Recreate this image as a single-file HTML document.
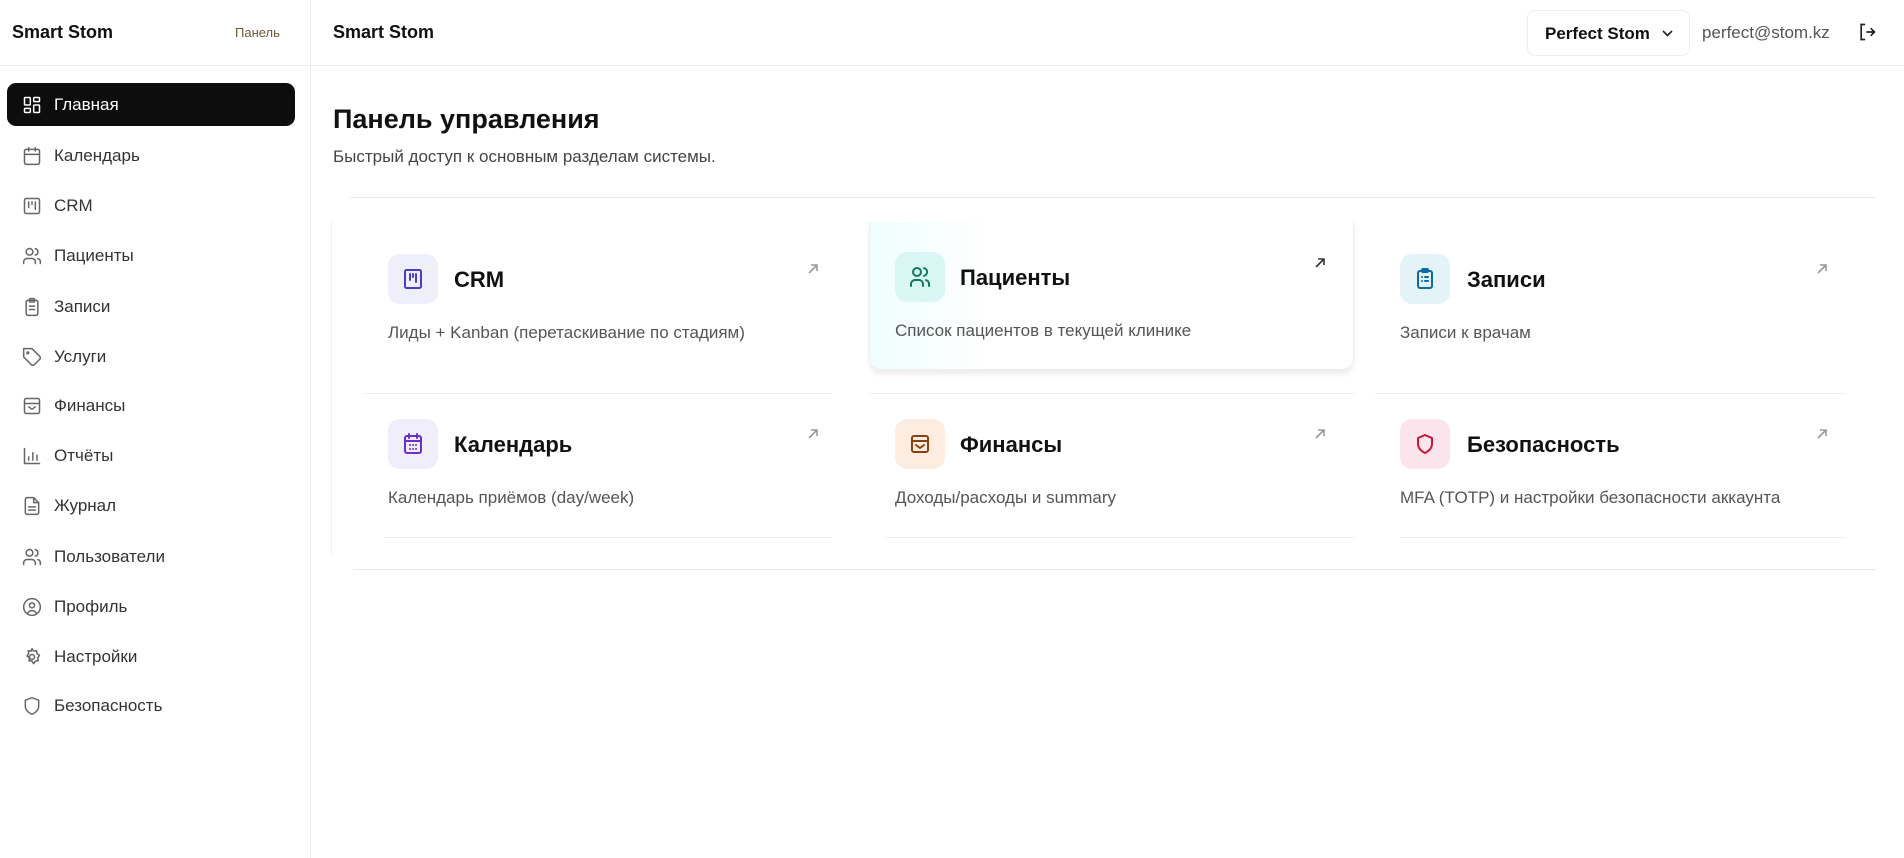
<!DOCTYPE html>
<html><head><meta charset="utf-8"><style>
*{box-sizing:border-box;margin:0;padding:0}
body{width:1904px;height:858px;overflow:hidden;background:#fff;font-family:"Liberation Sans","DejaVu Sans",sans-serif;color:#111;position:relative}
.abs{position:absolute}
.sb{left:0;top:0;width:311px;height:858px;border-right:1px solid #ececec}
.hdr{left:0;top:0;width:1904px;height:66px;border-bottom:1px solid #ececec}
.nav{position:absolute;left:7px;width:288px;height:43px;border-radius:9px;display:flex;align-items:center;padding-left:15px;font-size:17px;color:#333}
.nav svg{width:20px;height:20px;margin-right:12px;stroke:#666;fill:none;stroke-width:1.8;stroke-linecap:round;stroke-linejoin:round}
.nav.act{background:#0d0d0d;color:#fff}
.nav.act svg{stroke:#fff}
.ib{position:absolute;width:50px;height:50px;border-radius:12px;display:flex;align-items:center;justify-content:center}
.ib svg{width:24px;height:24px;fill:none;stroke-width:2;stroke-linecap:round;stroke-linejoin:round}
.ct{position:absolute;font-size:22px;font-weight:bold;color:#111}
.cd{position:absolute;font-size:17px;color:#555}
.ar{position:absolute;width:14px;height:14px;stroke:#999;fill:none;stroke-width:1.6}
</style></head><body>
<div class="abs hdr"></div>
<div class="abs sb"></div>
<div class="abs" style="left:12px;top:22px;font-size:18px;font-weight:bold">Smart Stom</div>
<div class="abs" style="left:235px;top:25px;font-size:13px;color:#6b5a3c">Панель</div>
<div class="abs" style="left:333px;top:22px;font-size:18px;font-weight:bold">Smart Stom</div>
<div class="abs" style="left:1527px;top:10px;width:163px;height:46px;border:1px solid #eee;border-radius:8px;font-size:17px;font-weight:bold;padding:13px 0 0 17px">Perfect Stom<svg style="position:absolute;left:133px;top:18px" width="13" height="9" viewBox="0 0 13 9"><path d="M2 2l4.5 4.5L11 2" stroke="#222" stroke-width="1.6" fill="none"/></svg></div>
<div class="abs" style="left:1702px;top:23px;font-size:17px;color:#555">perfect@stom.kz</div>
<svg class="abs" style="left:1857px;top:22px" width="20" height="20" viewBox="0 0 24 24" fill="none" stroke="#222" stroke-width="2" stroke-linecap="round"><path d="M9 3H5v18h4M12 12h9M17 8l4 4-4 4"/></svg>

<div class="nav act" style="top:83px"><svg viewBox="0 0 24 24"><rect x="3" y="3" width="7" height="9" rx="1"/><rect x="14" y="3" width="7" height="5" rx="1"/><rect x="14" y="12" width="7" height="9" rx="1"/><rect x="3" y="16" width="7" height="5" rx="1"/></svg>Главная</div>
<div class="nav" style="top:134px"><svg viewBox="0 0 24 24"><rect x="3" y="4" width="18" height="18" rx="2"/><path d="M16 2v4M8 2v4M3 10h18"/></svg>Календарь</div>
<div class="nav" style="top:184px"><svg viewBox="0 0 24 24"><rect x="3" y="3" width="18" height="18" rx="2"/><path d="M8 7v7M12 7v3M16 7v9"/></svg>CRM</div>
<div class="nav" style="top:234px"><svg viewBox="0 0 24 24"><circle cx="9" cy="7" r="4"/><path d="M2 21v-2a4 4 0 014-4h6a4 4 0 014 4v2M16 3.1a4 4 0 010 7.8M22 21v-2a4 4 0 00-3-3.9"/></svg>Пациенты</div>
<div class="nav" style="top:285px"><svg viewBox="0 0 24 24"><rect x="5" y="4" width="14" height="18" rx="2"/><rect x="9" y="2" width="6" height="4" rx="1"/><path d="M9 11h6M9 15h6"/></svg>Записи</div>
<div class="nav" style="top:335px"><svg viewBox="0 0 24 24"><path d="M12 2H2v10l9.3 9.3a2.4 2.4 0 003.4 0l6.6-6.6a2.4 2.4 0 000-3.4z"/><circle cx="7" cy="7" r="1"/></svg>Услуги</div>
<div class="nav" style="top:384px"><svg viewBox="0 0 24 24"><rect x="3" y="3" width="18" height="18" rx="2"/><path d="M3 9h18M8 13l4 3 4-3"/></svg>Финансы</div>
<div class="nav" style="top:434px"><svg viewBox="0 0 24 24"><path d="M3 3v18h18M8 17v-4M13 17V8M18 17v-6"/></svg>Отчёты</div>
<div class="nav" style="top:484px"><svg viewBox="0 0 24 24"><path d="M14 2H6a2 2 0 00-2 2v16a2 2 0 002 2h12a2 2 0 002-2V8z"/><path d="M14 2v6h6M8 13h8M8 17h8"/></svg>Журнал</div>
<div class="nav" style="top:535px"><svg viewBox="0 0 24 24"><circle cx="9" cy="7" r="4"/><path d="M2 21v-2a4 4 0 014-4h6a4 4 0 014 4v2M16 3.1a4 4 0 010 7.8M22 21v-2a4 4 0 00-3-3.9"/></svg>Пользователи</div>
<div class="nav" style="top:585px"><svg viewBox="0 0 24 24"><circle cx="12" cy="12" r="10"/><circle cx="12" cy="10" r="3"/><path d="M7 19a6 6 0 0110 0"/></svg>Профиль</div>
<div class="nav" style="top:635px"><svg viewBox="0 0 24 24"><circle cx="12" cy="12" r="3"/><path d="M12 2l2 3 3.5-.5.5 3.5 3 2-2 3 .5 3.5-3.5.5-2 3-2-3-3.5-.5.5-3.5-3-2 2-3-.5-3.5 3.5.5z"/></svg>Настройки</div>
<div class="nav" style="top:684px"><svg viewBox="0 0 24 24"><path d="M12 22s8-3 8-10V5l-8-3-8 3v7c0 7 8 10 8 10z"/></svg>Безопасность</div>

<div class="abs" style="left:333px;top:104px;font-size:27px;font-weight:bold;color:#111">Панель управления</div>
<div class="abs" style="left:333px;top:147px;font-size:17px;color:#444">Быстрый доступ к основным разделам системы.</div>
<div class="abs" style="left:350px;top:197px;width:1526px;height:1px;background:#e8e8e8"></div>
<div class="abs" style="left:331px;top:222px;width:1px;height:332px;background:#f0f0f0"></div>
<div class="abs" style="left:353px;top:569px;width:1523px;height:1px;background:#e8e8e8"></div>
<div class="abs" style="left:364px;top:393px;width:468px;height:1px;background:#eee"></div>
<div class="abs" style="left:1375px;top:393px;width:470px;height:1px;background:#eee"></div>
<div class="abs" style="left:385px;top:537px;width:447px;height:1px;background:#eee"></div>
<div class="abs" style="left:1400px;top:537px;width:445px;height:1px;background:#eee"></div>
<div class="abs" style="left:869px;top:222px;width:485px;height:148px;border:1px solid #eee;border-top:none;border-radius:0 0 12px 12px;box-shadow:0 4px 6px rgba(0,0,0,0.08);background:linear-gradient(90deg,#effdfd 0,#fff 120px)"></div>
<div class="abs" style="left:869px;top:393px;width:485px;height:1px;background:#eee"></div>
<div class="abs" style="left:885px;top:537px;width:469px;height:1px;background:#eee"></div>

<div class="ib" style="left:388px;top:254px;background:#efeefb"><svg viewBox="0 0 24 24" stroke="#4a3fc2"><rect x="4" y="3" width="16" height="18" rx="1.5"/><path d="M9 7v6M12 7v3M15 7v8"/></svg></div>
<div class="ct" style="left:454px;top:267px">CRM</div>
<div class="cd" style="left:388px;top:323px">Лиды + Kanban (перетаскивание по стадиям)</div>
<svg class="ar" style="left:806px;top:262px" viewBox="0 0 14 14"><path d="M3 11L11 3M5 3h6v6"/></svg>

<div class="ib" style="left:895px;top:252px;background:#d9f6f5"><svg viewBox="0 0 24 24" stroke="#137a5e"><circle cx="9" cy="7" r="4"/><path d="M3 21v-2a4 4 0 014-4h4a4 4 0 014 4v2M16 3.1a4 4 0 010 7.8M21 21v-2a4 4 0 00-3-3.9"/></svg></div>
<div class="ct" style="left:960px;top:265px">Пациенты</div>
<div class="cd" style="left:895px;top:321px">Список пациентов в текущей клинике</div>
<svg class="ar" style="left:1313px;top:256px;stroke:#333" viewBox="0 0 14 14"><path d="M3 11L11 3M5 3h6v6"/></svg>

<div class="ib" style="left:1400px;top:254px;background:#e3f3f8"><svg viewBox="0 0 24 24" stroke="#0b6aa8"><rect x="5" y="4" width="14" height="17" rx="2"/><rect x="9" y="2" width="6" height="3" rx="1"/><path d="M9 10h.01M12 10h3M9 14h.01M12 14h3"/></svg></div>
<div class="ct" style="left:1467px;top:267px">Записи</div>
<div class="cd" style="left:1400px;top:323px">Записи к врачам</div>
<svg class="ar" style="left:1815px;top:262px" viewBox="0 0 14 14"><path d="M3 11L11 3M5 3h6v6"/></svg>

<div class="ib" style="left:388px;top:419px;background:#f1eefb"><svg viewBox="0 0 24 24" stroke="#6a2fc6"><rect x="4" y="4" width="16" height="17" rx="2"/><path d="M8 2v4M16 2v4M4 9h16M9 13h.01M12 13h.01M15 13h.01M9 17h.01M12 17h.01M15 17h.01"/></svg></div>
<div class="ct" style="left:454px;top:432px">Календарь</div>
<div class="cd" style="left:388px;top:488px">Календарь приёмов (day/week)</div>
<svg class="ar" style="left:806px;top:427px" viewBox="0 0 14 14"><path d="M3 11L11 3M5 3h6v6"/></svg>

<div class="ib" style="left:895px;top:419px;background:#fdece0"><svg viewBox="0 0 24 24" stroke="#8a3f10"><rect x="4" y="4" width="16" height="16" rx="2"/><path d="M4 9h16M8 13l4 3 4-3"/></svg></div>
<div class="ct" style="left:960px;top:432px">Финансы</div>
<div class="cd" style="left:895px;top:488px">Доходы/расходы и summary</div>
<svg class="ar" style="left:1313px;top:427px" viewBox="0 0 14 14"><path d="M3 11L11 3M5 3h6v6"/></svg>

<div class="ib" style="left:1400px;top:419px;background:#fce4ec"><svg viewBox="0 0 24 24" stroke="#c8143c"><path d="M12 21s7-3 7-9V6l-7-3-7 3v6c0 6 7 9 7 9z"/></svg></div>
<div class="ct" style="left:1467px;top:432px">Безопасность</div>
<div class="cd" style="left:1400px;top:488px">MFA (TOTP) и настройки безопасности аккаунта</div>
<svg class="ar" style="left:1815px;top:427px" viewBox="0 0 14 14"><path d="M3 11L11 3M5 3h6v6"/></svg>
</body></html>
